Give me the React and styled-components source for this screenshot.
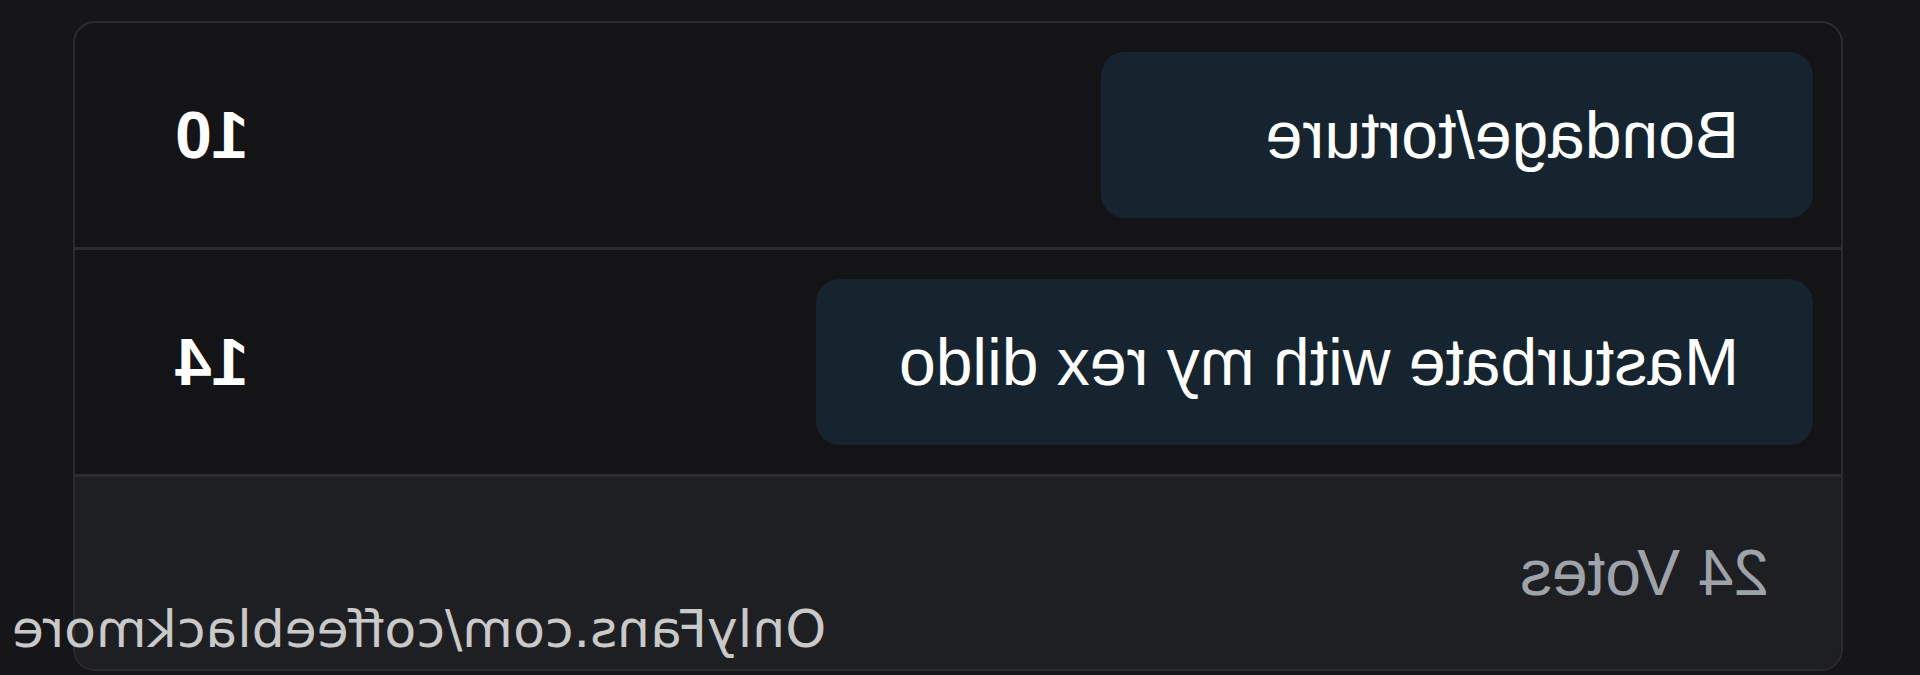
import styled, { createGlobalStyle } from "styled-components";

const GlobalStyle = createGlobalStyle`
  html, body {
    margin: 0;
    padding: 0;
    background: #161618;
  }
  * {
    box-sizing: border-box;
  }
`;

const options = [
  { id: 1, label: "Bondage/torture", votes: 10, minWidth: 712 },
  { id: 2, label: "Masturbate with my rex dildo", votes: 14 },
];

const App = () => {
  const total = options.reduce((sum, o) => sum + o.votes, 0);
  return (
    <>
      <GlobalStyle />
      <Page>
        <PollCard>
          {options.map(o => (
            <OptionRow key={o.id}>
              <Choice $minWidth={o.minWidth}>{o.label}</Choice>
              <Count>{o.votes}</Count>
            </OptionRow>
          ))}
          <PollFooter>
            <Total>{total} Votes</Total>
          </PollFooter>
        </PollCard>
        <Watermark>OnlyFans.com/coffeeblackmore</Watermark>
      </Page>
    </>
  );
};

export default App;

// whole page is drawn flipped left-to-right
const Page = styled.div`
  position: relative;
  width: 1920px;
  height: 675px;
  padding: 21px 73px 4px 77px;
  background: #161618;
  transform: scaleX(-1);
  overflow: hidden;
`;

const PollCard = styled.div`
  display: flex;
  flex-direction: column;
  height: 650px;
  border: 2px solid #2b2c2f;
  border-radius: 22px;
  background: #141416;
  overflow: hidden;
`;

const OptionRow = styled.div`
  display: flex;
  align-items: center;
  justify-content: space-between;
  height: 227px;
  padding: 0 100px 0 28px;
  border-bottom: 3px solid #2a2b2e;
`;

const Choice = styled.div`
  display: flex;
  align-items: center;
  height: 166px;
  min-width: ${p => (p.$minWidth ? `${p.$minWidth}px` : "0")};
  padding: 0 83px 0 74px;
  border-radius: 24px;
  background: #16242f;
  color: #ffffff;
  font-family: "Liberation Sans", Arial, sans-serif;
  font-size: 66px;
  white-space: nowrap;
`;

const Count = styled.span`
  color: #ffffff;
  font-family: "Liberation Sans", Arial, sans-serif;
  font-weight: 700;
  font-size: 66px;
`;

const PollFooter = styled.div`
  flex: 1;
  display: flex;
  align-items: center;
  padding-left: 72px;
  background: #1e1f22;
`;

const Total = styled.span`
  color: #9ea3ab;
  font-family: "Liberation Sans", Arial, sans-serif;
  font-size: 64px;
`;

const Watermark = styled.div`
  position: absolute;
  right: 12px;
  bottom: 16px;
  color: #c9c9c9;
  font-family: "DejaVu Sans", sans-serif;
  font-size: 52px;
  white-space: nowrap;
`;
